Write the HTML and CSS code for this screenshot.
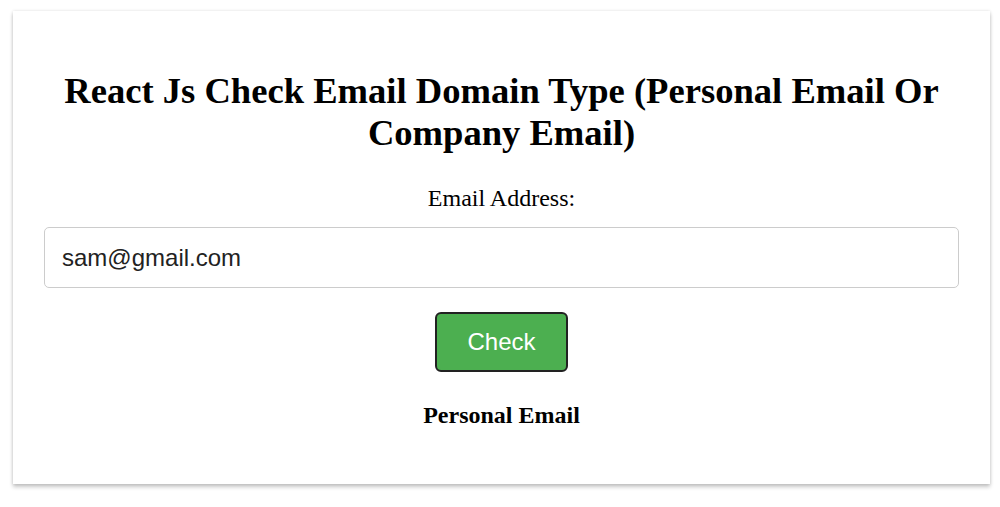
FILE: index.html
```html
<!DOCTYPE html>
<html>
<head>
<meta charset="utf-8">
<link rel="stylesheet" href="styles.css">
</head>
<body>
<div class="card">
  <h1 class="title">React Js Check Email Domain Type (Personal Email Or Company Email)</h1>
  <label class="label" for="email">Email Address:</label>
  <input class="input" id="email" type="text" value="sam@gmail.com">
  <button class="btn">Check</button>
  <p class="result">Personal Email</p>
</div>
</body>
</html>
```
FILE: styles.css
```css
html, body { margin: 0; padding: 0; background: #fff; }
body {
  font-family: "Liberation Serif", "Times New Roman", serif;
  padding: 11px 10px 20px 13px;
}
.card {
  width: 977px;
  box-sizing: border-box;
  padding: 59px 31px 55px;
  background: #fff;
  box-shadow: 0 3px 4px rgba(0,0,0,0.22), 0 0 3px rgba(0,0,0,0.12);
  display: flex;
  flex-direction: column;
  align-items: center;
}
.title {
  margin: 0;
  font-size: 36.6px;
  line-height: 42px;
  font-weight: bold;
  text-align: center;
  color: #000;
}
.label {
  margin-top: 30px;
  font-size: 24px;
  line-height: 28px;
  color: #000;
}
.input {
  margin-top: 15px;
  width: 915px;
  height: 61px;
  box-sizing: border-box;
  border: 1px solid #ccc;
  border-radius: 5px;
  padding: 0 17px;
  font-family: "Liberation Sans", Arial, sans-serif;
  font-size: 24px;
  color: #222;
  outline: none;
}
.btn {
  margin-top: 24px;
  width: 133px;
  height: 60px;
  background: #4caf50;
  border: 2px solid #222;
  border-radius: 6px;
  color: #fff;
  font-family: "Liberation Sans", Arial, sans-serif;
  font-size: 24px;
  padding: 0;
}
.result {
  margin: 29px 0 0;
  font-size: 24px;
  font-weight: bold;
  line-height: 28px;
  color: #000;
}
```
